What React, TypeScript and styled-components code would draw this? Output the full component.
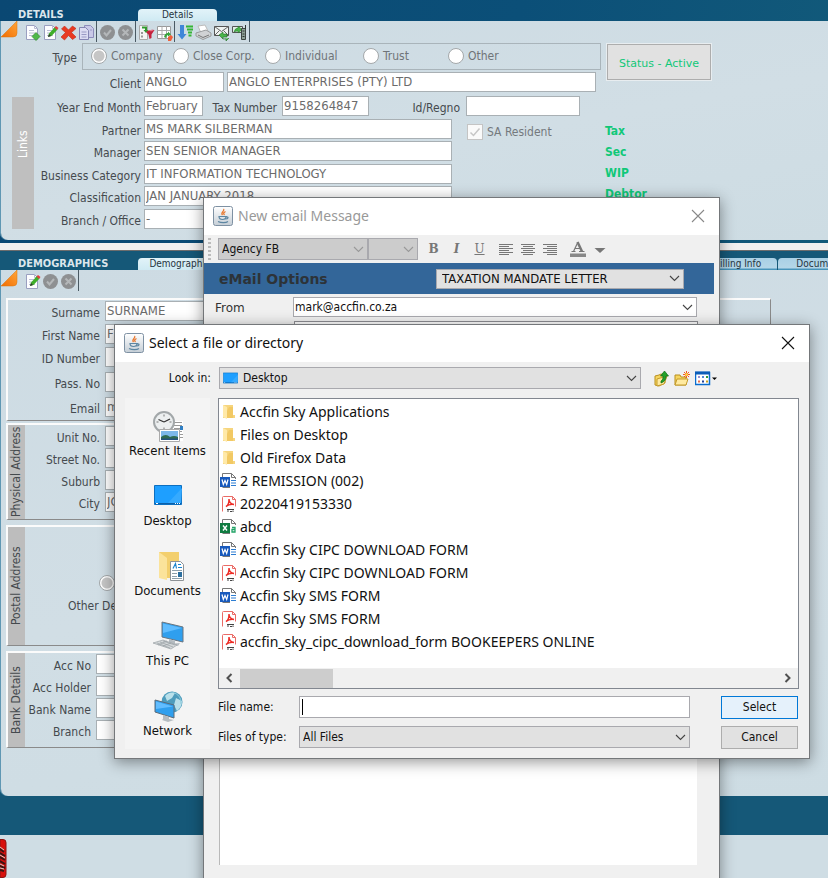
import React from "react";
import styled, { createGlobalStyle, css } from "styled-components";

const tahoma = '"DejaVu Sans Condensed", "DejaVu Sans", sans-serif';
const segoe = '"Noto Sans", "Open Sans", sans-serif';

const GlobalStyle = createGlobalStyle`
  * { box-sizing: border-box; }
  body { margin: 0; background: #125a7a; font-family: ${tahoma}; font-size: 12px; color: #454a4e; }
  button, input, select { font-family: inherit; font-size: inherit; color: inherit; margin: 0; }
`;

/* ---------- desktop and panels ---------- */

const Desktop = styled.main`
  position: relative;
  min-height: 100vh;
  overflow: hidden;
  display: flex;
  flex-direction: column;
`;

const PanelShell = styled.section<{ $tone: string; $foot: number }>`
  background: ${(p) => p.$tone};
  padding: 0 0 ${(p) => p.$foot}px 1px;
`;

const PanelHeader = styled.header<{ $height: number }>`
  height: ${(p) => p.$height}px;
  display: flex;
  align-items: flex-end;
  overflow: hidden;
`;

const PanelTitle = styled.h2`
  margin: 0;
  width: 137px;
  padding-left: 17px;
  font-size: 11px;
  line-height: 13px;
  font-weight: bold;
  color: #dce6ec;
`;

const Tab = styled.button<{ $dim?: boolean; $width: number }>`
  flex: none;
  width: ${(p) => p.$width}px;
  height: 12px;
  padding: 0;
  border: 0;
  border-radius: 4px 4px 0 0;
  background: ${(p) => (p.$dim ? "linear-gradient(#a9d0e5, #b4d6e8 80%, #2c83ae)" : "linear-gradient(#e2f3f9, #cfeaf3)")};
  font-size: 10px;
  line-height: 12px;
  color: #26343e;
`;

const TabGroup = styled.div`
  margin-left: auto;
  width: 130px;
  overflow: hidden;
  display: flex;
  gap: 1px;
`;

const Sheet = styled.div<{ $foot: number }>`
  background: linear-gradient(170deg, #cddbe3, #d1dee5 55%, #cddce3);
  border-radius: 0 0 0 7px;
  padding-bottom: ${(p) => p.$foot}px;
  box-shadow: -1px 0 0 #5f97b3;
`;

const Splitter = styled.div`
  height: 8px;
  background: #f0f0f0;
  border-bottom: 1px solid #6d6d6d;
`;

const FooterStrip = styled.footer`
  flex: 1;
  background: #cfdde4;
  padding-top: 4px;
`;

const ToolRow = styled.div`
  display: flex;
  align-items: flex-start;
  height: 22px;
`;

const ToolGroup = styled.div<{ $first?: boolean }>`
  display: flex;
  gap: 1px;
  height: 21px;
  padding: 3px 1px 0 ${(p) => (p.$first ? 6 : 2)}px;
  border-right: 1px solid #4a5a64;
`;

const ToolButton = styled.button`
  width: 17px;
  height: 17px;
  padding: 0;
  border: 0;
  background: none;
  svg { display: block; }
`;

/* ---------- form parts ---------- */

const DetailsBody = styled.div`
  display: flex;
  align-items: flex-start;
  padding-left: 11px;
`;

const LinksRail = styled.aside`
  flex: none;
  width: 22px;
  height: 132px;
  margin-top: 54px;
  padding: 0 0 33px;
  background: #bfbfbf;
  color: #fff;
  font-size: 12px;
  line-height: 22px;
  writing-mode: vertical-rl;
  transform: rotate(180deg);
  text-align: right;
`;

const DetailsForm = styled.div`
  width: 567px;
`;

const Row = styled.div<{ $after?: number }>`
  display: flex;
  align-items: center;
  height: 20px;
  margin-bottom: ${(p) => p.$after ?? 2}px;
`;

const Label = styled.label<{ $width: number; $gap?: number }>`
  flex: none;
  width: ${(p) => p.$width}px;
  margin-right: ${(p) => p.$gap ?? 3}px;
  text-align: right;
  white-space: nowrap;
  font-size: 12px;
  line-height: 18px;
  padding-top: 3px;
`;

const Field = styled.input<{ $width: number; $after?: number }>`
  flex: none;
  width: ${(p) => p.$width}px;
  height: 20px;
  margin-right: ${(p) => p.$after ?? 0}px;
  padding: 0 1px 1px;
  border: 1px solid #a9b0b4;
  background: #fff;
  color: #6b6b6b;
  font-size: 13px;
`;

const TypeRow = styled.div`
  display: flex;
  align-items: center;
  margin-bottom: 2px;
`;

const TypeBox = styled.div`
  flex: 1;
  display: grid;
  grid-template-columns: 82px 92px 98px 85px 1fr;
  align-items: center;
  height: 27px;
  padding: 0 0 2px 8px;
  border: 1px solid #a9b4ba;
  color: #6f7478;
`;

const RadioLabel = styled.label`
  display: flex;
  align-items: center;
  gap: 4px;
  font-size: 12px;
  white-space: nowrap;
`;

const Radio = styled.input`
  appearance: none;
  width: 16px;
  height: 16px;
  margin: 0;
  border: 1px solid #a4a8aa;
  border-radius: 50%;
  background: #fff;
  &:checked { background: radial-gradient(circle, #c6c6c6 5px, #fff 6px); }
`;

const CheckLabel = styled.label`
  display: flex;
  align-items: center;
  gap: 4px;
  margin-left: 15px;
  padding-top: 6px;
  font-size: 12px;
  color: #74797d;
`;

const CheckWrap = styled.span`
  display: grid;
  > * { grid-area: 1 / 1; }
`;

const Check = styled.input`
  appearance: none;
  width: 16px;
  height: 16px;
  border: 1px solid #c4c4c4;
  background: #fafafa;
`;

const StatusColumn = styled.div`
  margin-left: 5px;
`;

const StatusButton = styled.button`
  width: 106px;
  height: 38px;
  border: 2px solid #adadad;
  outline: 1px solid #e8edf0;
  outline-offset: -1px;
  background: #e1e1e1;
  color: #10c878;
  font-family: "DejaVu Sans", sans-serif;
  font-size: 11px;
  padding: 2px 0 0;
  white-space: nowrap;
`;

const StatusList = styled.ul`
  list-style: none;
  margin: 40px 0 0;
  margin-left: -1px;
  padding: 0;
  height: 79px;
  color: #10c878;
  font-size: 12px;
  font-weight: bold;
  line-height: 21px;
`;

const Groups = styled.div`
  width: calc(100% - 57px);
  padding: 6px 0 0 5px;
`;

const Group = styled.fieldset<{ $height: number; $after: number }>`
  display: flex;
  min-width: 0;
  height: ${(p) => p.$height}px;
  margin: 0 0 ${(p) => p.$after}px;
  padding: 0;
  border: 1px solid #8a8a8a;
  border-top: 2px solid #fbfbfb;
  border-left: 2px solid #fbfbfb;
`;

const SideLegend = styled.span`
  flex: none;
  width: 17px;
  background: #bdbdbd;
  writing-mode: vertical-rl;
  transform: rotate(180deg);
  text-align: center;
  font-size: 12px;
  line-height: 17px;
  white-space: nowrap;
`;

const GroupRows = styled.div`
  padding-top: 1px;
`;

const PostalRows = styled.div`
  display: flex;
  flex-direction: column;
  justify-content: flex-end;
  gap: 8px;
  padding: 0 0 32px 43px;
  white-space: nowrap;
  > input { margin-left: 31px; }
`;

/* ---------- windows ---------- */

const Window = styled.section<{ $z: number }>`
  position: absolute;
  z-index: ${(p) => p.$z};
  background: #f0f0f0;
  border: 1px solid #74777a;
  box-shadow: 0 3px 14px rgba(0, 0, 0, 0.42);
`;

const MailWindow = styled(Window)`
  top: 197px;
  left: 203px;
  right: 108px;
  bottom: -12px;
  display: flex;
  flex-direction: column;
`;

const FileWindow = styled(Window)`
  top: 324px;
  left: 114px;
  right: 18px;
  color: #111;
`;

const TitleBar = styled.header<{ $muted?: boolean }>`
  display: flex;
  align-items: center;
  height: 37px;
  padding: 0 14px 1px 9px;
  background: #fff;
  color: ${(p) => (p.$muted ? "#999" : "#111")};
  font-family: ${segoe};
  font-size: 14px;
  svg { flex: none; }
`;

const WindowTitle = styled.h1`
  flex: 1;
  margin: 0 0 0 5px;
  font-size: inherit;
  font-weight: normal;
  line-height: 20px;
`;

const IconButton = styled.button`
  flex: none;
  padding: 0;
  border: 0;
  background: none;
  display: block;
  svg { display: block; }
`;

const FormatBar = styled.div`
  display: flex;
  align-items: center;
  height: 28px;
  padding-left: 4px;
`;

const Grip = styled.span`
  width: 3px;
  height: 22px;
  margin-right: 7px;
  background: repeating-linear-gradient(#bbb 0 2px, transparent 2px 4px);
`;

const ComboWrap = styled.span<{ $width?: number }>`
  display: grid;
  align-items: center;
  ${(p) => (p.$width ? css`flex: none; width: ${p.$width}px;` : css`flex: 1; min-width: 0;`)}
  > * { grid-area: 1 / 1; pointer-events: none; }
  > select { pointer-events: auto; }
  > .chevron { justify-self: end; margin-right: 4px; }
  > .lead { margin-left: 4px; }
`;

const Combo = styled.select<{ $height: number; $fill: string; $indent?: number; $large?: boolean }>`
  appearance: none;
  width: 100%;
  height: ${(p) => p.$height}px;
  padding: 0 18px 1px ${(p) => p.$indent ?? 3}px;
  border: 1px solid #a9a9ae;
  border-radius: 0;
  background: ${(p) => p.$fill};
  color: #111;
  font-size: ${(p) => (p.$large ? 13 : 12)}px;
  opacity: 1;
`;

const FormatTools = styled.div<{ $lead: number }>`
  display: flex;
  align-items: center;
  gap: 6px;
  margin-left: ${(p) => p.$lead}px;
`;

const FormatLetter = styled.button<{ $kind: "bold" | "italic" | "under" }>`
  width: 17px;
  padding: 0;
  border: 0;
  background: none;
  color: #777;
  font-family: "DejaVu Serif", serif;
  font-size: 12px;
  line-height: 16px;
  font-weight: bold;
  ${(p) => p.$kind === "italic" && css`font-style: italic;`}
  ${(p) => p.$kind === "under" && css`text-decoration: underline; font-weight: normal;`}
`;

const OptionsBar = styled.div`
  display: flex;
  align-items: center;
  justify-content: space-between;
  height: 31px;
  margin-right: 5px;
  padding: 0 30px 0 15px;
  background: #336699;
`;

const OptionsTitle = styled.h2`
  margin: 0;
  font-family: "DejaVu Sans", sans-serif;
  font-size: 14px;
  color: #2d3338;
`;

const FromRow = styled.div`
  display: flex;
  align-items: center;
  padding: 3px 22px 4px 11px;
  color: #333;
`;

const FromLabel = styled.label`
  width: 78px;
  font-family: "DejaVu Sans", sans-serif;
  font-size: 12px;
  padding-top: 2px;
`;

const NextField = styled.input`
  margin: 0 21px 0 90px;
  height: 20px;
  border: 1px solid #8e8e93;
  background: #fff;
`;

const MailBody = styled.textarea`
  flex: 1;
  margin: 0 22px 27px 15px;
  border: 0;
  border-left: 1px solid #b9b9b9;
  background: #fff;
  resize: none;
`;

/* ---------- file dialog ---------- */

const LookRow = styled.div`
  display: flex;
  align-items: center;
  padding: 5px 168px 0 0;
`;

const LookLabel = styled.label`
  width: 104px;
  padding-right: 8px;
  text-align: right;
  font-size: 12px;
`;

const LookTools = styled.div`
  display: flex;
  align-items: center;
  gap: 5px;
  width: 63px;
  margin: 0 -76px 0 13px;
`;

const DialogBody = styled.div`
  display: grid;
  grid-template-columns: 85px minmax(0, 1fr);
  gap: 8px;
  padding: 9px 10px 9px 10px;
`;

const Places = styled.nav`
  display: flex;
  flex-direction: column;
  background: #f4f4f4;
  padding-top: 4px;
`;

const Place = styled.button`
  height: 70px;
  padding: 8px 0 0;
  border: 0;
  background: none;
  display: flex;
  flex-direction: column;
  align-items: center;
  justify-content: flex-start;
  gap: 1px;
  font-size: 13px;
  line-height: 15px;
  white-space: nowrap;
  color: #111;
  &:last-child { height: 67px; }
`;

const ListFrame = styled.div`
  border: 1px solid #828790;
  background: #fff;
  height: 291px;
  display: flex;
  flex-direction: column;
  margin-bottom: 7px;
`;

const FileList = styled.ul`
  flex: 1;
  list-style: none;
  margin: 0;
  padding: 1px 0 0 1px;
`;

const FileItem = styled.li`
  display: flex;
  align-items: center;
  gap: 3px;
  height: 23px;
  font-family: ${segoe};
  font-size: 14px;
  white-space: nowrap;
`;

const ScrollBar = styled.div`
  display: flex;
  height: 20px;
  padding: 0 6px;
  align-items: center;
  background: #f0f0f0;
`;

const ScrollThumb = styled.div`
  width: 93px;
  height: 19px;
  margin: 0 auto 0 7px;
  background: #cdcdcd;
`;

const BottomRow = styled.div`
  display: flex;
  align-items: center;
  height: 22px;
  margin-bottom: 8px;
  &:last-child { margin-bottom: 0; }
`;

const BottomLabel = styled.label`
  flex: none;
  width: 81px;
  font-size: 12px;
`;

const NameWrap = styled.span`
  flex: 1;
  display: grid;
  align-items: center;
  > * { grid-area: 1 / 1; }
`;

const NameField = styled.input`
  width: 100%;
  height: 22px;
  padding: 0 4px;
  border: 1px solid #a9a9ae;
  background: #fff;
`;

const Caret = styled.span`
  width: 1px;
  height: 16px;
  margin-left: 3px;
  background: #000;
`;

const PushButton = styled.button<{ $primary?: boolean }>`
  flex: none;
  width: 77px;
  height: 23px;
  margin: 0 1px 0 31px;
  padding: 0 0 1px;
  border: 1px solid ${(p) => (p.$primary ? "#0078d7" : "#adadad")};
  background: ${(p) => (p.$primary ? "#e5f1fb" : "#e1e1e1")};
  font-size: 12px;
  color: #111;
`;

/* ---------- drawings ---------- */

const Svg = ({ w, h = w, box, className, children }: { w: number; h?: number; box?: string; className?: string; children: React.ReactNode }) => (
  <svg className={className} width={w} height={h} viewBox={box ?? `0 0 ${w} ${h}`} fill="none" aria-hidden="true">{children}</svg>
);

const Chevron = ({ color = "#444" }: { color?: string }) => (
  <Svg w={11} h={7} className="chevron"><path d="M1 1l4.500 4.500L10 1" stroke={color} strokeWidth="1.100" /></Svg>
);

const OrangeCorner = () => (
  <Svg w={17} h={17}>
    <defs><linearGradient id="corner" x1="1" y1="0" x2="0" y2="1"><stop offset="0" stopColor="#ffa63a" /><stop offset="1" stopColor="#f26c00" /></linearGradient></defs>
    <path d="M16 0v12q0 4-4 4H0z" fill="url(#corner)" stroke="#d8740f" strokeWidth=".5" />
  </Svg>
);

const page = (
  <>
    <path d="M2.500 1.500h8l3 3v11h-11z" fill="#fdfdff" stroke="#9a9fc0" />
    <path d="M10.500 1.500v3h3M5 6.500h5M5 9h6M5 11.500h6" stroke="#b9bdd4" />
  </>
);
const NewIcon = () => <Svg w={17}>{page}<path d="M12 8.500l4 4-4 4-4-4z" fill="#4fb84a" stroke="#2f8a2c" strokeWidth=".7" /></Svg>;
const EditIcon = () => (
  <Svg w={17}>{page}<path d="M6 13l1-3.500 6-6.500 2.500 2.500-6 6.500z" fill="#3fae2a" /><path d="M12.500 3.500L14 2l2.500 2-1.500 2z" fill="#e0403a" /><path d="M6 13l1-3 2 2z" fill="#333" /></Svg>
);
const DeleteIcon = () => <Svg w={17}><path d="M4.500 2L8.500 6 12.500 2 16 4.500 11.500 8.500 16 13l-3.500 2.500-4-4-4 4.500L1 13l4.500-4.500L1.500 5z" fill="#e83a22" stroke="#c22a14" strokeWidth=".6" /></Svg>;
const CopyIcon = () => (
  <Svg w={17}>
    <path d="M6.500 1.500h6l3 3v9h-9z" fill="#c9c9e8" stroke="#8d8dbb" /><path d="M1.500 3.500h6l3 3v9h-9z" fill="#dcdcf2" stroke="#8585b3" /><path d="M3.500 8h5M3.500 10.500h5M3.500 13h5M12 6h2" stroke="#9a9ac4" />
  </Svg>
);
const GrayTick = () => <Svg w={17}><circle cx="8.500" cy="8.500" r="7.500" fill="#8e9092" /><path d="M5 8.500l2.500 3 4.500-5.500" stroke="#b4b7b9" strokeWidth="2" /></Svg>;
const GrayCross = () => <Svg w={17}><circle cx="8.500" cy="8.500" r="7.500" fill="#8e9092" /><path d="M5.500 5.500l6 6M11.500 5.500l-6 6" stroke="#b4b7b9" strokeWidth="2" /></Svg>;
const ExportIcon = () => (
  <Svg w={17}><path d="M1.500 1.500h8v14h-8z" fill="#f5f5f5" stroke="#aaa" /><path d="M3 8h2v2H3zM3 11.500h2v2H3z" fill="#999" /><path d="M4 3.500h4v4" stroke="#2f9a2f" strokeWidth="2" /><path d="M5.500 6h5L8 9z" fill="#2f9a2f" /><path d="M8 8q4-3 8.500-2l-3 4.500v3.500l-2 1-1-4.500z" fill="#c4203c" /><path d="M10 6.500q3-1 6 0-3 1.500-6 0z" fill="#ec7f8f" /></Svg>
);
const GridIcon = () => (
  <Svg w={17}><path d="M1.500 2.500h13v12h-13z" fill="#fff" stroke="#9a9a9a" /><path d="M1.500 6.500h13M1.500 10.500h13M6 2.500v12M10.500 2.500v12" stroke="#aaa" /><path d="M8 13q1-4 4-4v-1.500l3 3-3 2v-1.500q-1.500 0-2 3z" fill="#36a53a" /><path d="M12 13l3-2 2 2-2 4h-3z" fill="#f0603a" /></Svg>
);
const SortIcon = () => <Svg w={17}><path d="M3 1h4v9h2.500L5 15.500.5 10H3z" fill="#3f86d8" /><path d="M9 2.500h7M10 5.500h6M11 8.500h4M11.500 11.500h3" stroke="#35b535" strokeWidth="2" /></Svg>;
const PrintIcon = () => (
  <Svg w={17}><path d="M3 2l7-1 3 6-7 2z" fill="#fff" stroke="#bbb" /><path d="M1 9l10-3 5 3v3l-8 3.500-7-3.500z" fill="#d0d2d4" stroke="#999b9d" /><path d="M3 11l5 2.500 6-2.500" stroke="#777" /></Svg>
);
const MailIcon = () => (
  <Svg w={17}><path d="M1.500 2.500h14v9h-14z" fill="#eef2f0" stroke="#555" /><path d="M1.500 2.500l7 5 7-5M1.500 11.500l5-5M15.500 11.500l-5-5" stroke="#666" /><path d="M6 11l4-3v2h4v3h-4v2zM16 14l-3 3v-2h-3" fill="#49b54a" stroke="#236b25" strokeWidth=".6" /></Svg>
);
const PhoneIcon = () => (
  <Svg w={17}><path d="M1.500 2.500h10v6h-10z" fill="#dfeee4" stroke="#555" /><path d="M3 8q1-4 4-4V2l4 3.500L7 9V7Q5 7 3 8z" fill="#49b54a" stroke="#236b25" strokeWidth=".5" /><path d="M10.500 4.500h4v11h-4z" fill="#8fa198" stroke="#3c4642" /><path d="M14.500 1v4M11.500 7h2M11.500 10h2M11.500 12.500h2" stroke="#2c3431" /></Svg>
);

const JavaIcon = () => (
  <Svg w={20}>
    <defs><linearGradient id="javaTile" x1="0" y1="0" x2="0" y2="1"><stop offset="0" stopColor="#fff" /><stop offset="1" stopColor="#c5ced6" /></linearGradient></defs>
    <rect x=".5" y=".5" width="19" height="19" rx="2" fill="url(#javaTile)" stroke="#7e91a3" />
    <path d="M10.500 3c2 2-3.500 3-1 6M12.500 5.500c-2 1-2.500 2-1 3.500" stroke="#e8762c" strokeWidth="1.300" />
    <path d="M6 10.500h7c0 4-7 4-7 0zM13 11c3-.5 2.500 2-.5 2M5 15.500c3 1.500 8 1.500 10 0" stroke="#5d86a2" strokeWidth="1.200" />
  </Svg>
);
const CloseIcon = ({ color }: { color: string }) => <Svg w={14}><path d="M1 1l12 12M13 1L1 13" stroke={color} strokeWidth="1.100" /></Svg>;

const Lines = ({ kind }: { kind: "left" | "center" | "right" }) => {
  const short = { left: "M1 3.500h10M1 7.500h10M1 11.500h10", center: "M3 3.500h10M3 7.500h10M3 11.500h10", right: "M5 3.500h10M5 7.500h10M5 11.500h10" }[kind];
  return <Svg w={16} h={13}><path d={`M1 1.500h14M1 5.500h14M1 9.500h14${short}`} stroke="#777" /></Svg>;
};
const ColorIcon = () => (
  <Svg w={37} h={17}>
    <path d="M1 12.500h16v3.500H1z" fill="#888" /><path d="M4.500 10.500L8.500 2" stroke="#777" strokeWidth="1.200" /><path d="M8.500 1l4.500 9.500" stroke="#777" strokeWidth="2.500" /><path d="M6 7.500h6M2.500 10.500h4M10 10.500h5.500" stroke="#777" strokeWidth="1.200" /><path d="M25.500 7h11L31 12z" fill="#777" />
  </Svg>
);

const Screen = ({ w, h }: { w: number; h: number }) => (
  <Svg w={w} h={h} box="0 0 28 20" className="lead">
    <path d="M.5.5h27v19H.5z" fill="#1e9fff" stroke="#0c6fc0" /><path d="M28 4L14 19h13z" fill="#35aaff" /><path d="M1 18.500h26" stroke="#0b5fa8" /><path d="M2 18.500h2M21 18.500h1M23 18.500h1M25 18.500h1" stroke="#fff" />
  </Svg>
);
const RecentIcon = () => (
  <Svg w={32}>
    <path d="M16 11h15v20H16z" fill="#fff" /><path d="M18 12.500h12M22 15.500h8M22 18.500h8M27 21.500h3M28 24.500h3M28 27.500h3" stroke="#9a9a9a" /><path d="M28 16h3v4h-3z" fill="#2f7fc4" />
    <circle cx="12" cy="12" r="10" fill="#eceff0" stroke="#a2a7a9" strokeWidth="2" /><path d="M12 12L6.500 9.500M12 12l6-3" stroke="#333" strokeWidth="1.300" /><path d="M12 4.500v2M12 17.500v2M4.500 12h2M17.500 12h2" stroke="#777" />
    <path d="M7.500 19.500h20v12h-20z" fill="#fff" stroke="#aaa" /><path d="M9 21h17v9H9z" fill="#7cb8ea" /><path d="M9 27q5-4 9 0 4-2 8 0v3H9z" fill="#2f6b52" /><path d="M9 28.500h17V30H9z" fill="#24517e" />
  </Svg>
);
const DesktopPlace = () => <Svg w={32}><path d="M2.500 5.500h27v19h-27z" fill="#1e9fff" stroke="#0c6fc0" /><path d="M30 8L15 24h14z" fill="#35aaff" /><path d="M3 23.500h26" stroke="#0b5fa8" /><path d="M4 23.500h2M23 23.500h1M25 23.500h1M27 23.500h1" stroke="#fff" /></Svg>;
const DocumentsIcon = () => (
  <Svg w={32}>
    <path d="M7 2h20v26H7z" fill="#f3cf6d" /><path d="M7 2l8 6v22l-8-2z" fill="#fbe39b" />
    <path d="M18.500 11.500h10l3 3v16h-13z" fill="#fff" stroke="#8d9296" /><path d="M21 18.500l2.500-5 1 5M26 14.500h3M26 17.500h4" stroke="#1b84cf" strokeWidth="1.200" /><path d="M20 20.500h10M20 23.500h5M20 26.500h5M20 28.500h10" stroke="#8fa0ab" /><path d="M26 22h4v5h-4z" fill="#2b6e9e" />
  </Svg>
);
const PcIcon = () => (
  <Svg w={32}>
    <path d="M10 2l21 5v15l-21-5z" fill="#2f9fee" stroke="#6a7580" /><path d="M11 3.500L30 8 11 13z" fill="#5fbcff" /><path d="M17 19l6 2v4l-6-2zM16 24l12-1-2 3z" fill="#b5bcc1" />
    <path d="M1 23l10-3 14 5-6 4z" fill="#d4d8da" stroke="#9aa1a5" strokeWidth=".7" /><path d="M5 23l13 5M8 22l13 5M11 21l12 4M6 25l9-4M11 26l8-3" stroke="#9aa1a5" strokeWidth=".7" />
  </Svg>
);
const NetworkIcon = () => (
  <Svg w={32}>
    <circle cx="20" cy="12" r="10.500" fill="#4e9cbc" /><path d="M13 6q4-5 10-3l-3 5-5 3zM24 8l6 3q0 6-5 10l-3-6z" fill="#b9e0ea" /><path d="M20 2q10 3 9 12" stroke="#8ccadb" />
    <path d="M3 10l19 5v13L3 22z" fill="#2f9fee" stroke="#5c6b78" /><path d="M4 11.500l17 5L4 19z" fill="#62bdff" /><path d="M11 25l6 2v2l5 1-6 2-6-2 1-1z" fill="#b5bcc1" />
  </Svg>
);

const FolderGlyph = () => <Svg w={17} h={18}><path d="M3 2h10v10h2v3H3z" fill="#f6d57e" /><path d="M3 2l4 2v12l-4-2z" fill="#ffe9a8" /><path d="M9 4h4v11H7V8z" fill="#f2c964" /></Svg>;
const WordGlyph = () => (
  <Svg w={17} h={18}><path d="M2.500 5v-3.500h9l4 4v10h-13" fill="#fff" stroke="#777" /><path d="M11.500 1.500v4h4" stroke="#777" /><path d="M10 7h7v10h-7z" fill="#fff" /><path d="M11 8.500h5M11 11h5M11 13.500h5" stroke="#2d7dd2" /><path d="M0 5h10v10H0z" fill="#185abd" /><path d="M2 7.500l1.300 5L5 8.500l1.700 4 1.300-5" stroke="#fff" strokeWidth="1.200" /></Svg>
);
const ExcelGlyph = () => (
  <Svg w={17} h={18}><path d="M2.500 5v-3.500h9l4 4v10h-13" fill="#fff" stroke="#777" /><path d="M11.500 1.500v4h4" stroke="#777" /><path d="M10 7h7v10h-7z" fill="#fff" /><path d="M12 9.500h3v4.500h-3v-2.500h3" stroke="#21a366" strokeWidth="1.300" /><path d="M0 5h10v10H0z" fill="#107c41" /><path d="M3 7.500l4 5M7 7.500l-4 5" stroke="#fff" strokeWidth="1.400" /></Svg>
);
const PdfGlyph = () => (
  <Svg w={17} h={18}><path d="M2.500 16.500v-14q0-1 1-1h9l3 3v7" fill="#fff" stroke="#ea6b66" /><path d="M12.500 1.500v3h3" stroke="#ea6b66" /><path d="M6 11.500c2-1 3-4 3-7.500 0 3.500 2 5 5 5.500-3-.5-5.500 0-8 2z" stroke="#ed2b24" strokeWidth="1.400" /><path d="M7 14.500h7M7 16h2M10 16.500h2M13 15.500v1.500" stroke="#444" /></Svg>
);

const UpFolder = () => <Svg w={15} h={17}><path d="M1 6l4-1 2-1 4 1v8l-6 3-4-1z" fill="#f5d560" stroke="#b98f1f" /><path d="M3 9l10-3-3 8-7 2z" fill="#ffeaa0" stroke="#c49b2b" /><path d="M7 11c2-1 2-3 2-5H6.500L10.500 1l4 5H12c0 4-2 6-5 7z" fill="#24a12a" stroke="#0d6b14" strokeWidth=".7" /></Svg>;
const NewFolder = () => <Svg w={16} h={17}><path d="M1 5h5l1 2h5v8H1z" fill="#f5d560" stroke="#b98f1f" /><path d="M3 9h11l-2 6H1z" fill="#ffeaa0" stroke="#c49b2b" /><path d="M12.500 1v7M9 4.500h7M10 2l5 5M15 2l-5 5" stroke="#f25a22" /><circle cx="12.500" cy="4.500" r="1.500" fill="#ffd24a" /></Svg>;
const ViewMenu = () => (
  <Svg w={22} h={15}><path d="M.5 1.500h14v12H.5z" fill="#fff" stroke="#0a6cce" strokeWidth="1.500" /><path d="M0 2h15" stroke="#0a5cb8" strokeWidth="3" /><path d="M3 6h2" stroke="#9a8fd0" strokeWidth="2" /><path d="M3 10.500h2" stroke="#e8704a" strokeWidth="2" /><path d="M7 6h2" stroke="#4f86d8" strokeWidth="2" /><path d="M7 10.500h2" stroke="#1f3f98" strokeWidth="2" /><path d="M11 6h2" stroke="#2f9a3b" strokeWidth="2" /><path d="M11 10.500h2" stroke="#c9a020" strokeWidth="2" /><path d="M17 6.500h5L19.500 9z" fill="#000" /></Svg>
);
const ScrollArrow = ({ right }: { right?: boolean }) => <Svg w={8} h={10}><path d={right ? "M1.500 1l4 4-4 4" : "M6.500 1l-4 4 4 4"} stroke="#505050" strokeWidth="2" /></Svg>;
const RedBadge = () => (
  <Svg w={7} h={39}><path d="M0 .5h3q3 0 3 3v32q0 3-3 3H0z" fill="#d8100c" stroke="#8a1512" /><path d="M0 10l4 3M0 14l5 3M0 18l5 3M0 22l5 3M0 27l5 2M0 31l4 1" stroke="#3b1512" strokeWidth="2" /><path d="M0 8l4 3M0 16l5 3M0 25l4 2M0 29l4 1" stroke="#d9cfc6" /></Svg>
);

/* ---------- assembled parts ---------- */

const Tool = ({ name, children }: { name: string; children: React.ReactNode }) => <ToolButton type="button" aria-label={name}>{children}</ToolButton>;

type EntryProps = { id: string; label: string; value?: string; labelWidth: number; gap?: number; width: number; after?: number; children?: React.ReactNode };
const Entry = ({ id, label, value = "", labelWidth, gap, width, after, children }: EntryProps) => (
  <Row $after={after}>
    <Label htmlFor={id} $width={labelWidth} $gap={gap}>{label}</Label>
    <Field id={id} defaultValue={value} readOnly $width={width} />
    {children}
  </Row>
);

const types = ["Company", "Close Corp.", "Individual", "Trust", "Other"];

const DetailsPanel = () => (
  <PanelShell $tone="linear-gradient(100deg, #0a4873, #0b4f78 60%, #125a7a)" $foot={3}>
    <PanelHeader $height={21}><PanelTitle>DETAILS</PanelTitle><Tab type="button" $width={79}>Details</Tab></PanelHeader>
    <Sheet $foot={9}>
      <ToolRow>
        <OrangeCorner />
        <ToolGroup $first>
          <Tool name="New"><NewIcon /></Tool><Tool name="Edit"><EditIcon /></Tool><Tool name="Delete"><DeleteIcon /></Tool><Tool name="Copy"><CopyIcon /></Tool>
        </ToolGroup>
        <ToolGroup><Tool name="Accept"><GrayTick /></Tool><Tool name="Cancel"><GrayCross /></Tool></ToolGroup>
        <ToolGroup><Tool name="Export"><ExportIcon /></Tool><Tool name="Grid"><GridIcon /></Tool></ToolGroup>
        <ToolGroup>
          <Tool name="Sort"><SortIcon /></Tool><Tool name="Print"><PrintIcon /></Tool><Tool name="Email"><MailIcon /></Tool><Tool name="Message"><PhoneIcon /></Tool>
        </ToolGroup>
      </ToolRow>
      <DetailsBody>
        <LinksRail>Links</LinksRail>
        <DetailsForm>
          <TypeRow role="radiogroup" aria-label="Type">
            <Label as="span" $width={43} $gap={5}>Type</Label>
            <TypeBox>
              {types.map((t, i) => <RadioLabel key={t}><Radio type="radio" name="type" defaultChecked={i === 0} />{t}</RadioLabel>)}
            </TypeBox>
          </TypeRow>
          <Row $after={4}>
            <Label htmlFor="client" $width={107}>Client</Label>
            <Field id="client" defaultValue="ANGLO" readOnly $width={80} $after={3} />
            <Field aria-label="Client name" defaultValue="ANGLO ENTERPRISES (PTY) LTD" readOnly $width={369} />
          </Row>
          <Row $after={3}>
            <Label htmlFor="year" $width={107}>Year End Month</Label>
            <Field id="year" defaultValue="February" readOnly $width={59} />
            <Label htmlFor="tax" $width={74} $gap={5}>Tax Number</Label>
            <Field id="tax" defaultValue="9158264847" readOnly $width={87} />
            <Label htmlFor="reg" $width={91} $gap={6}>Id/Regno</Label>
            <Field id="reg" readOnly $width={114} />
          </Row>
          <Entry id="partner" label="Partner" value="MS MARK SILBERMAN" labelWidth={107} width={308}>
            <CheckLabel>
              <CheckWrap><Check type="checkbox" defaultChecked /><Svg w={16}><path d="M3.500 8.500l3 3 6-7" stroke="#c6c6c6" strokeWidth="1.500" /></Svg></CheckWrap>
              SA Resident
            </CheckLabel>
          </Entry>
          <Entry id="manager" label="Manager" value="SEN SENIOR MANAGER" labelWidth={107} width={308} after={3} />
          <Entry id="category" label="Business Category" value="IT INFORMATION TECHNOLOGY" labelWidth={107} width={308} />
          <Entry id="class" label="Classification" value="JAN JANUARY 2018" labelWidth={107} width={308} after={3} />
          <Entry id="branch" label="Branch / Office" value="-" labelWidth={107} width={308} />
        </DetailsForm>
        <StatusColumn>
          <StatusButton type="button">Status - Active</StatusButton>
          <StatusList><li>Tax</li><li>Sec</li><li>WIP</li><li>Debtor</li></StatusList>
        </StatusColumn>
      </DetailsBody>
    </Sheet>
  </PanelShell>
);

const DemographicsPanel = () => (
  <PanelShell $tone="#155878" $foot={39}>
    <PanelHeader $height={19}>
      <PanelTitle>DEMOGRAPHICS</PanelTitle><Tab type="button" $width={88}>Demographics</Tab>
      <TabGroup><Tab type="button" $dim $width={79}>Billing Info</Tab><Tab type="button" $dim $width={88}>Documents</Tab></TabGroup>
    </PanelHeader>
    <Sheet $foot={48}>
      <ToolRow>
        <OrangeCorner />
        <ToolGroup $first><Tool name="Edit"><EditIcon /></Tool><Tool name="Accept"><GrayTick /></Tool><Tool name="Cancel"><GrayCross /></Tool></ToolGroup>
      </ToolRow>
      <Groups>
        <Group $height={123} $after={2}>
          <GroupRows>
            <Entry id="surname" label="Surname" value="SURNAME" labelWidth={92} gap={5} width={300} after={3} />
            <Entry id="first" label="First Name" value="FIRST NAME" labelWidth={92} gap={5} width={300} after={3} />
            <Entry id="idno" label="ID Number" labelWidth={92} gap={5} width={300} after={5} />
            <Entry id="pass" label="Pass. No" labelWidth={92} gap={5} width={300} after={5} />
            <Entry id="email" label="Email" value="mark@accfin.co.za" labelWidth={92} gap={5} width={300} />
          </GroupRows>
        </Group>
        <Group $height={97} $after={5}>
          <SideLegend>Physical Address</SideLegend>
          <GroupRows>
            <Entry id="unit" label="Unit No." labelWidth={75} gap={5} width={300} />
            <Entry id="street" label="Street No." labelWidth={75} gap={5} width={300} />
            <Entry id="suburb" label="Suburb" labelWidth={75} gap={5} width={300} />
            <Entry id="city" label="City" value="JOHANNESBURG" labelWidth={75} gap={5} width={300} />
          </GroupRows>
        </Group>
        <Group $height={121} $after={5}>
          <SideLegend>Postal Address</SideLegend>
          <PostalRows><Radio type="radio" name="postal" aria-label="Other Delivery" defaultChecked /><span>Other Delivery</span></PostalRows>
        </Group>
        <Group $height={97} $after={0}>
          <SideLegend>Bank Details</SideLegend>
          <GroupRows>
            <Entry id="accno" label="Acc No" labelWidth={66} gap={5} width={300} />
            <Entry id="holder" label="Acc Holder" labelWidth={66} gap={5} width={300} />
            <Entry id="bank" label="Bank Name" labelWidth={66} gap={5} width={300} />
            <Entry id="bbranch" label="Branch" labelWidth={66} gap={5} width={300} />
          </GroupRows>
        </Group>
      </Groups>
    </Sheet>
  </PanelShell>
);

const EmailWindow = () => (
  <MailWindow $z={1} aria-label="New email Message">
    <TitleBar $muted><JavaIcon /><WindowTitle>New email Message</WindowTitle><IconButton type="button" aria-label="Close message"><CloseIcon color="#888" /></IconButton></TitleBar>
    <FormatBar>
      <Grip />
      <ComboWrap $width={150}><Combo aria-label="Font" disabled $height={22} $fill="#ccc"><option>Agency FB</option></Combo><Chevron color="#999" /></ComboWrap>
      <ComboWrap $width={50}><Combo aria-label="Font size" disabled $height={22} $fill="#ccc"><option> </option></Combo><Chevron color="#999" /></ComboWrap>
      <FormatTools $lead={7}>
        <FormatLetter type="button" $kind="bold">B</FormatLetter>
        <FormatLetter type="button" $kind="italic">I</FormatLetter>
        <FormatLetter type="button" $kind="under">U</FormatLetter>
      </FormatTools>
      <FormatTools $lead={10}>
        <IconButton type="button" aria-label="Align left"><Lines kind="left" /></IconButton>
        <IconButton type="button" aria-label="Align center"><Lines kind="center" /></IconButton>
        <IconButton type="button" aria-label="Align right"><Lines kind="right" /></IconButton>
      </FormatTools>
      <FormatTools $lead={11}><IconButton type="button" aria-label="Text color"><ColorIcon /></IconButton></FormatTools>
    </FormatBar>
    <OptionsBar>
      <OptionsTitle>eMail Options</OptionsTitle>
      <ComboWrap $width={248}><Combo aria-label="Template" $height={20} $fill="#e1e1e1" $indent={5} $large><option>TAXATION MANDATE LETTER</option></Combo><Chevron /></ComboWrap>
    </OptionsBar>
    <FromRow>
      <FromLabel htmlFor="from">From</FromLabel>
      <ComboWrap><Combo id="from" $height={20} $fill="#fff" $indent={1}><option>mark@accfin.co.za</option></Combo><Chevron /></ComboWrap>
    </FromRow>
    <NextField aria-label="To" />
    <MailBody aria-label="Message" />
  </MailWindow>
);

const files: [() => React.ReactElement, string][] = [
  [FolderGlyph, "Accfin Sky Applications"],
  [FolderGlyph, "Files on Desktop"],
  [FolderGlyph, "Old Firefox Data"],
  [WordGlyph, "2 REMISSION (002)"],
  [PdfGlyph, "20220419153330"],
  [ExcelGlyph, "abcd"],
  [WordGlyph, "Accfin Sky CIPC DOWNLOAD FORM"],
  [PdfGlyph, "Accfin Sky CIPC DOWNLOAD FORM"],
  [WordGlyph, "Accfin Sky SMS FORM"],
  [PdfGlyph, "Accfin Sky SMS FORM"],
  [PdfGlyph, "accfin_sky_cipc_download_form BOOKEEPERS ONLINE"],
];

const places: [() => React.ReactElement, string][] = [
  [RecentIcon, "Recent Items"],
  [DesktopPlace, "Desktop"],
  [DocumentsIcon, "Documents"],
  [PcIcon, "This PC"],
  [NetworkIcon, "Network"],
];

const FileDialog = () => (
  <FileWindow $z={2} role="dialog" aria-label="Select a file or directory">
    <TitleBar><JavaIcon /><WindowTitle>Select a file or directory</WindowTitle><IconButton type="button" aria-label="Close dialog"><CloseIcon color="#111" /></IconButton></TitleBar>
    <LookRow>
      <LookLabel htmlFor="look">Look in:</LookLabel>
      <ComboWrap>
        <Combo id="look" $height={22} $fill="#e1e1e1" $indent={23}><option>Desktop</option></Combo>
        <Screen w={15} h={12} />
        <Chevron />
      </ComboWrap>
      <LookTools>
        <IconButton type="button" aria-label="Up one level"><UpFolder /></IconButton>
        <IconButton type="button" aria-label="New folder"><NewFolder /></IconButton>
        <IconButton type="button" aria-label="View menu"><ViewMenu /></IconButton>
      </LookTools>
    </LookRow>
    <DialogBody>
      <Places>{places.map(([Icon, name]) => <Place key={name} type="button"><Icon />{name}</Place>)}</Places>
      <div>
        <ListFrame>
          <FileList>{files.map(([Icon, name], i) => <FileItem key={i}><Icon />{name}</FileItem>)}</FileList>
          <ScrollBar>
            <IconButton type="button" aria-label="Scroll left"><ScrollArrow /></IconButton>
            <ScrollThumb />
            <IconButton type="button" aria-label="Scroll right"><ScrollArrow right /></IconButton>
          </ScrollBar>
        </ListFrame>
        <BottomRow>
          <BottomLabel htmlFor="filename">File name:</BottomLabel>
          <NameWrap><NameField id="filename" type="text" /><Caret /></NameWrap>
          <PushButton type="button" $primary>Select</PushButton>
        </BottomRow>
        <BottomRow>
          <BottomLabel htmlFor="filetype">Files of type:</BottomLabel>
          <ComboWrap><Combo id="filetype" $height={22} $fill="#e1e1e1"><option>All Files</option></Combo><Chevron /></ComboWrap>
          <PushButton type="button">Cancel</PushButton>
        </BottomRow>
      </div>
    </DialogBody>
  </FileWindow>
);

export default function App() {
  return (
    <>
      <GlobalStyle />
      <Desktop>
        <DetailsPanel />
        <Splitter />
        <DemographicsPanel />
        <FooterStrip><RedBadge /></FooterStrip>
        <EmailWindow />
        <FileDialog />
      </Desktop>
    </>
  );
}
